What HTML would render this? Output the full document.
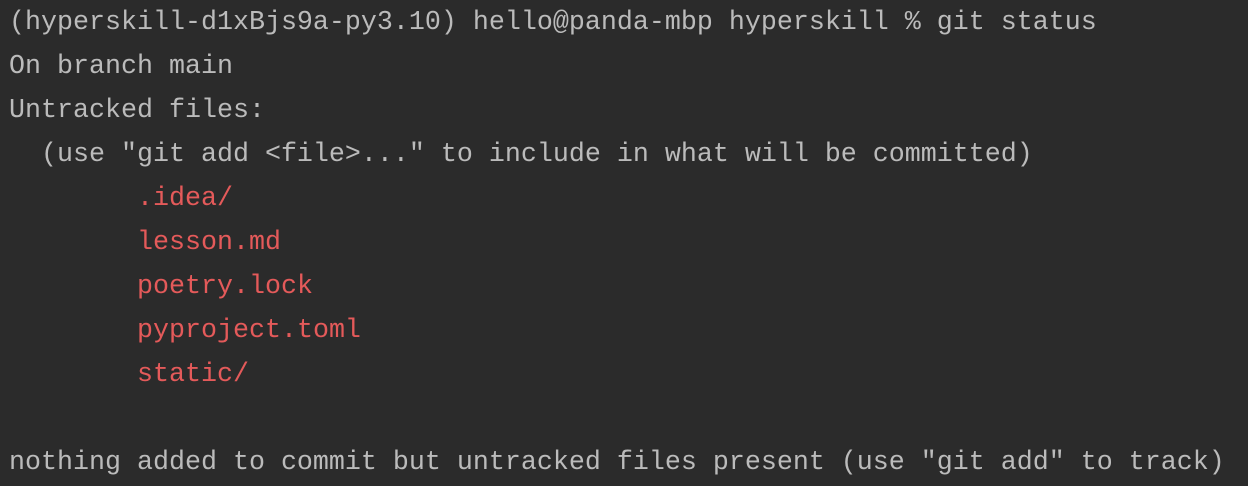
<!DOCTYPE html>
<html><head><style>
html,body{margin:0;padding:0;background:#2b2b2b;width:1248px;height:486px;overflow:hidden}
pre{margin:0;position:absolute;left:9px;top:1px;font-family:"Liberation Mono",monospace;font-size:26.67px;line-height:44px;color:#bbbbbb;letter-spacing:0}
.r{color:#e45a5a}
</style></head><body>
<pre>(hyperskill-d1xBjs9a-py3.10) hello@panda-mbp hyperskill % git status
On branch main
Untracked files:
  (use "git add &lt;file&gt;..." to include in what will be committed)
        <span class="r">.idea/</span>
        <span class="r">lesson.md</span>
        <span class="r">poetry.lock</span>
        <span class="r">pyproject.toml</span>
        <span class="r">static/</span>

nothing added to commit but untracked files present (use "git add" to track)</pre>
</body></html>
